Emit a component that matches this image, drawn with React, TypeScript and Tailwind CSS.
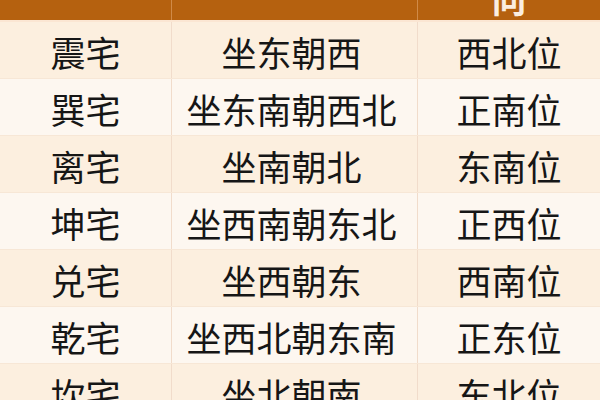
const rows = [
  ['震宅', '坐东朝西', '西北位'],
  ['巽宅', '坐东南朝西北', '正南位'],
  ['离宅', '坐南朝北', '东南位'],
  ['坤宅', '坐西南朝东北', '正西位'],
  ['兑宅', '坐西朝东', '西南位'],
  ['乾宅', '坐西北朝东南', '正东位'],
  ['坎宅', '坐北朝南', '东北位'],
];

const font = { fontFamily: '"Noto Sans CJK SC", "Noto Sans", sans-serif' };

export default function App() {
  return (
    <div className="w-[600px] h-[400px] overflow-hidden bg-[#fdf6ee]" style={font}>
      {/* header, mostly cut off */}
      <div className="grid grid-cols-[172px_246px_182px] grid-rows-[20px] h-[20px] bg-[#b5610f] overflow-hidden">
        <div className="border-r border-[#d08a48]" />
        <div className="border-r border-[#d08a48]" />
        <div className="flex items-end justify-center h-[20px]">
          <span className="text-[35px] leading-none font-bold text-[#fbeee0] mb-[5px] shrink-0">向</span>
        </div>
      </div>
      <div className="h-[2px] bg-[#fbe6d3]" />

      {rows.map((r, i) => (
        <div
          key={r[0]}
          className={`grid grid-cols-[172px_246px_182px] h-[57px] border-b border-[#f7e7d6] ${
            i % 2 === 0 ? 'bg-[#fcefdf]' : 'bg-[#fdf7f0]'
          }`}
        >
          <div className="flex items-center justify-center border-r border-[#f1dccb] pt-[2px]">
            <span className="text-[35px] leading-none text-[#161616]">{r[0]}</span>
          </div>
          <div className="flex items-center justify-center border-r border-[#f1dccb] pt-[2px]">
            <span className="text-[35px] leading-none text-[#161616] pr-[6px]">{r[1]}</span>
          </div>
          <div className="flex items-center justify-center pt-[2px]">
            <span className="text-[35px] leading-none text-[#161616]">{r[2]}</span>
          </div>
        </div>
      ))}
    </div>
  );
}
